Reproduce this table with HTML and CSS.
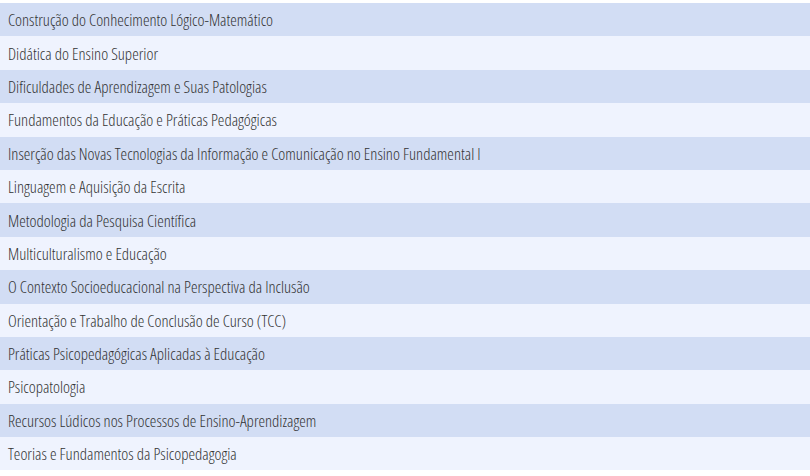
FILE: index.html
```html
<!DOCTYPE html>
<html lang="pt">
<head>
<meta charset="utf-8">
<link rel="stylesheet" href="styles.css">
</head>
<body>
<ul class="list">
  <li class="row">Construção do Conhecimento Lógico-Matemático</li>
  <li class="row">Didática do Ensino Superior</li>
  <li class="row">Dificuldades de Aprendizagem e Suas Patologias</li>
  <li class="row">Fundamentos da Educação e Práticas Pedagógicas</li>
  <li class="row">Inserção das Novas Tecnologias da Informação e Comunicação no Ensino Fundamental I</li>
  <li class="row">Linguagem e Aquisição da Escrita</li>
  <li class="row">Metodologia da Pesquisa Científica</li>
  <li class="row">Multiculturalismo e Educação</li>
  <li class="row">O Contexto Socioeducacional na Perspectiva da Inclusão</li>
  <li class="row">Orientação e Trabalho de Conclusão de Curso (TCC)</li>
  <li class="row">Práticas Psicopedagógicas Aplicadas à Educação</li>
  <li class="row">Psicopatologia</li>
  <li class="row">Recursos Lúdicos nos Processos de Ensino-Aprendizagem</li>
  <li class="row">Teorias e Fundamentos da Psicopedagogia</li>
</ul>
</body>
</html>
```

FILE: styles.css
```css
html, body {
  margin: 0;
  padding: 0;
  background: #ffffff;
}
body {
  padding-top: 3px;
  font-family: "Open Sans", "Liberation Sans", sans-serif;
}
.list {
  list-style: none;
  margin: 0;
  padding: 0;
}
.row {
  height: 33.4px;
  box-sizing: border-box;
  display: flex;
  align-items: center;
  padding-left: 8px;
  font-size: 16.6px;
  font-weight: 300;
  font-stretch: 75%;
  color: #333333;
  background: #eff3fe;
  white-space: nowrap;
}
.row:nth-child(odd) {
  background: #d2ddf4;
}
```
